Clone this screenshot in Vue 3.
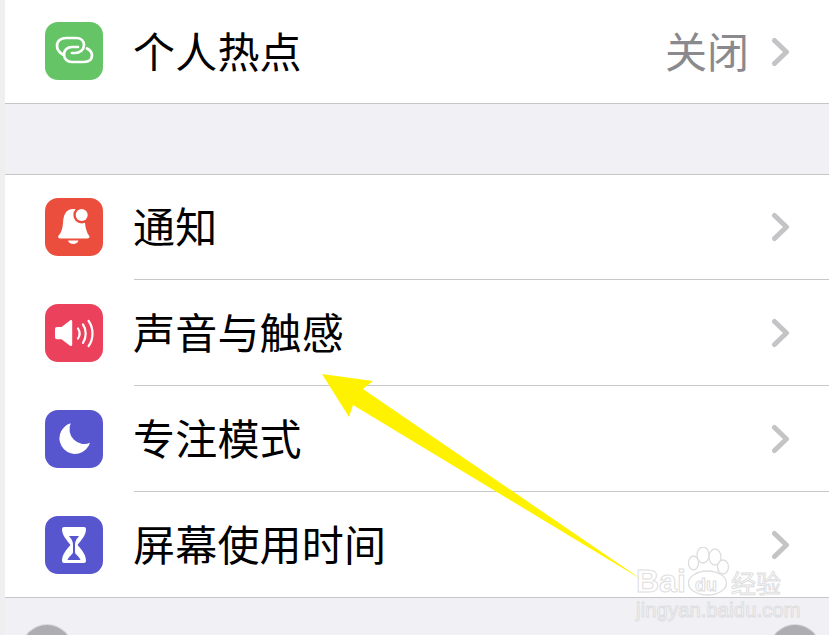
<script setup>
const topRow = { label: '个人热点', value: '关闭', icon: 'link', color: '#65c466' }

const rows = [
  { label: '通知', icon: 'bell', color: '#eb4e3d' },
  { label: '声音与触感', icon: 'sound', color: '#ec415c' },
  { label: '专注模式', icon: 'moon', color: '#5856cf' },
  { label: '屏幕使用时间', icon: 'hourglass', color: '#5856cf' }
]

const groups = [[topRow], rows]
</script>

<template>
  <div class="page">
    <div class="screen">
      <section v-for="(group, g) in groups" :key="g" class="group">
        <div v-for="row in group" :key="row.label" class="row">
          <span class="icon" :style="{ background: row.color }">
            <svg width="58" height="58" viewBox="0 0 58 58">
              <g v-if="row.icon === 'link'" fill="none" stroke="#fff" stroke-width="2.7" stroke-linecap="round">
                <path d="M18 32.5C14 30.5 12 27.5 12 23.5C12 19 16 16 21 16H31C36 16 39 19 39 23C39 27.5 35 31 30 31H27" />
                <path d="M33 25H27C22.5 25 19 28 19 32.5C19 37 22.5 40 27 40H39C44 40 47 37.5 47 33.5C47 30.5 45 28 42 26.5" />
              </g>
              <g v-else-if="row.icon === 'bell'" fill="#fff">
                <path d="M28.5 11C20 11 18.5 18 18 25C17.6 31 16 35 13.6 37.6C12.6 38.8 13 40.5 15 40.5H42.6C44.6 40.5 45 38.8 44 37.6C42 35 40.6 31 40 25C38 24 34 20 33.5 13C32 11.6 30.3 11 28.5 11Z" />
                <path d="M23 42.5H33.5C33 44.8 30.8 46 28.2 46C25.7 46 23.6 44.8 23 42.5Z" />
                <circle cx="36.7" cy="17" r="8.4" fill="#eb4e3d" />
                <circle cx="36.7" cy="17" r="6" />
              </g>
              <g v-else-if="row.icon === 'sound'">
                <path fill="#fff" d="M10 25C10 23.8 10.8 23 12 23H16.5L25 16.4C26 15.7 27.2 16.2 27.2 17.6V40.6C27.2 42 26 42.5 25 41.8L16.5 35.2H12C10.8 35.2 10 34.4 10 33.2Z" />
                <g fill="none" stroke="#fff" stroke-width="2.2" stroke-linecap="round">
                  <path d="M33 24.5C35 27.5 35 31.5 33 34.5" />
                  <path d="M38 20.5C41.6 25.5 41.6 33.5 38 38.8" />
                  <path d="M43.6 17C48.8 24 48.8 35 43.6 42" />
                </g>
              </g>
              <path
                v-else-if="row.icon === 'moon'"
                fill="#fff"
                d="M25.7 13.3A15.6 15.6 0 1 0 45 32.7A14.7 14.7 0 0 1 25.7 13.3Z"
              />
              <g v-else>
                <path fill="#fff" d="M19 11H39Q41 11 41 13C41 20 36 24 32.5 29C36 33 41 38 41 45Q41 47 39 47H19Q17 47 17 45C17 38 22 33 25.500 29C22 24 17 20 17 13Q17 11 19 11Z" />
                <path fill="#5856cf" d="M24 20H34L33 21.500C31 23.500 30 26 30 29V36C30 38.500 34 40 35.500 44H22.500C24 40 28 38.500 28 36V29C28 26 27 23.500 25 21.500Z" />
              </g>
            </svg>
          </span>
          <div class="row-main">
            <span class="label">{{ row.label }}</span>
            <span v-if="row.value" class="value">{{ row.value }}</span>
            <svg class="chevron" width="20" height="30" viewBox="0 0 20 30">
              <path d="M3.500 3.500L15.500 15L3.500 26.500" fill="none" stroke="#c4c4c7" stroke-width="5" stroke-linecap="round" stroke-linejoin="round" />
            </svg>
          </div>
        </div>
      </section>
      <div class="next-icons">
        <span class="round"></span>
        <span class="round"></span>
      </div>
    </div>

    <!-- 截图上的黄色箭头 -->
    <svg class="arrow" width="829" height="635" viewBox="0 0 829 635">
      <path d="M322 374L373 381L363 389L644 581L353 405L349 417Z" fill="#fff200" />
    </svg>

    <!-- 百度经验水印 -->
    <div class="watermark">
      <svg class="paw" width="60" height="60" viewBox="0 0 60 60">
        <g fill="#fff" fill-opacity="0.5" stroke="#dedee0" stroke-width="1.300">
          <ellipse cx="15" cy="8" rx="6" ry="8" />
          <ellipse cx="27" cy="10" rx="6" ry="8" />
          <ellipse cx="5.500" cy="16" rx="5" ry="7" />
          <ellipse cx="35" cy="20" rx="5.500" ry="7" />
          <ellipse cx="19.500" cy="36" rx="19" ry="12" />
        </g>
      </svg>
      <div class="wm-top">
        <span class="wm-bai">Bai</span>
        <span class="wm-du">du</span>
        <span class="wm-cn">经验</span>
      </div>
      <div class="wm-url">jingyan.baidu.com</div>
    </div>
  </div>
</template>

<style>
html,
body {
  margin: 0;
  background: #fff;
}
</style>

<style scoped>
.page {
  position: relative;
  width: 829px;
  height: 635px;
  overflow: hidden;
  padding-left: 5px;
  box-sizing: border-box;
  background: #efeff0;
  font-family: "Noto Sans CJK SC", "Liberation Sans", sans-serif;
}

.screen {
  display: flex;
  flex-direction: column;
  height: 100%;
  background: #f0f0f5;
}

.group {
  background: #fff;
  border-bottom: 1px solid #c6c6c8;
}

.group + .group {
  margin-top: 70px;
  border-top: 1px solid #c6c6c8;
}

.row {
  display: flex;
  align-items: center;
  height: 103px;
  padding-left: 40px;
}

.row:first-child .icon {
  margin-bottom: 1px;
}

.group + .group .row {
  height: 106px;
}

.group + .group .row:first-child {
  height: 105px;
}

.group + .group .row:last-child {
  height: 105px;
}

.icon {
  flex: none;
  width: 58px;
  height: 58px;
  border-radius: 13px;
}

.icon svg {
  display: block;
}

.row-main {
  flex: 1;
  display: flex;
  align-items: center;
  align-self: stretch;
  margin-left: 31px;
  padding-right: 38px;
  border-bottom: 1px solid #c8c8ca;
}

.row:last-child .row-main {
  border-bottom: 0;
}

.label {
  flex: 1;
  margin-left: -1px;
  padding-bottom: 4px;
  font-size: 42px;
  line-height: 56px;
  letter-spacing: 0.2px;
  color: #000;
}

.value {
  padding-bottom: 4px;
  font-size: 42px;
  line-height: 56px;
  color: #8a8a8e;
  margin-right: 22px;
}

.chevron {
  flex: none;
}

.next-icons {
  display: flex;
  justify-content: space-between;
  padding: 27px 9px 0 17px;
}

.round {
  width: 50px;
  height: 50px;
  border-radius: 50%;
  background: #aeaeb2;
  box-shadow: 0 0 0 1px #d8d8dc;
}

.arrow {
  position: absolute;
  left: 0;
  top: 0;
}

.watermark {
  position: absolute;
  left: 636px;
  top: 547px;
  width: 150px;
  height: 72px;
  font-family: "Liberation Sans", "Noto Sans CJK SC", sans-serif;
}

.paw {
  position: absolute;
  left: 52px;
  top: 0;
}

.wm-top,
.wm-url {
  position: absolute;
  left: 0;
  color: rgba(255, 255, 255, 0.55);
  -webkit-text-stroke: 1px #dedee0;
  white-space: nowrap;
}

.wm-top {
  top: 17px;
  width: 150px;
  height: 34px;
}

.wm-top span {
  position: absolute;
}

.wm-bai {
  left: 0;
  top: 0;
  font-size: 32px;
  line-height: 34px;
  font-weight: 700;
}

.wm-du {
  left: 59px;
  top: 9px;
  font-size: 18px;
  line-height: 24px;
  font-weight: 700;
}

.wm-cn {
  left: 95px;
  top: 3px;
  font-size: 25px;
  line-height: 30px;
  font-family: "Noto Sans CJK SC", sans-serif;
}

.wm-url {
  top: 52px;
  font-size: 20px;
  line-height: 22px;
  letter-spacing: 0.2px;
}
</style>
